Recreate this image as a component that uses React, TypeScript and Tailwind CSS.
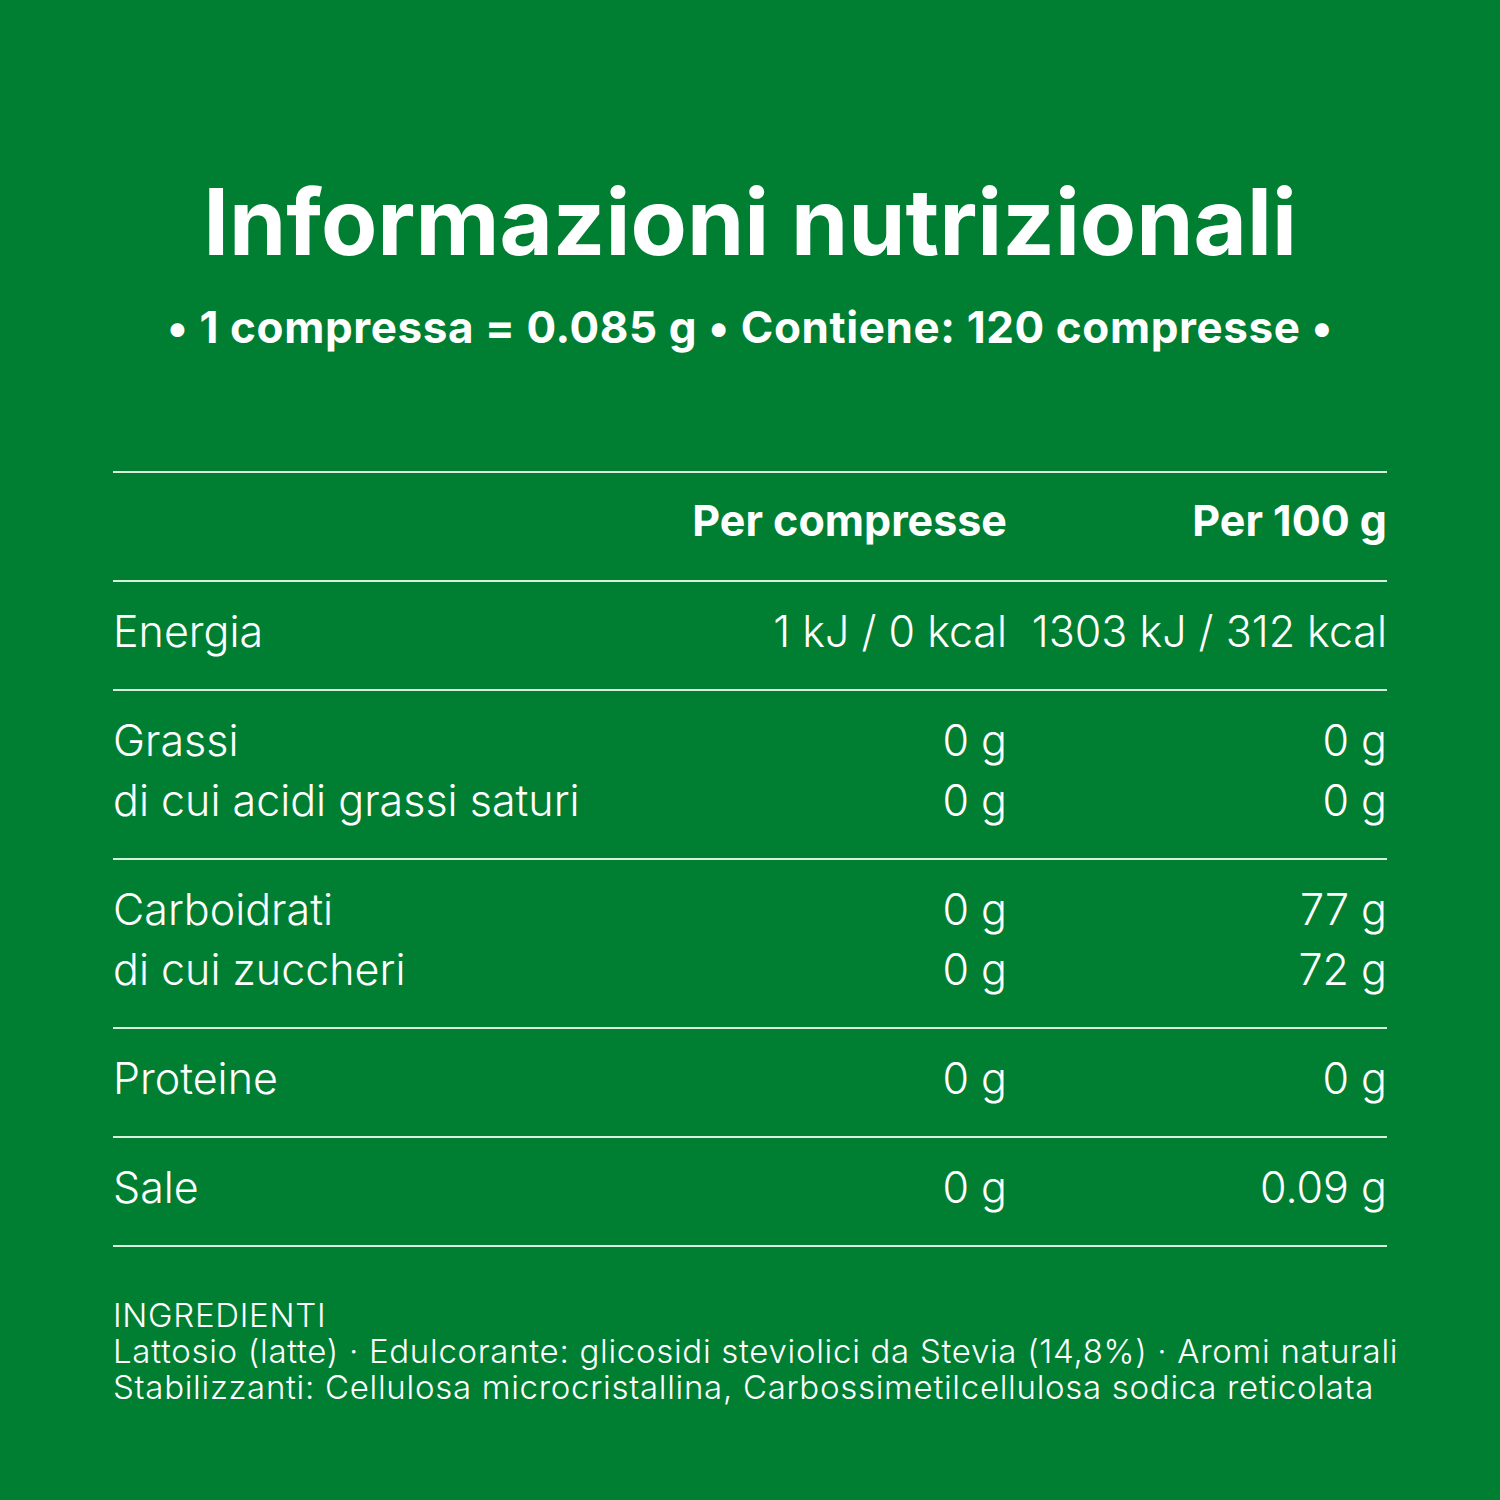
const rows: { labels: string[]; perTab: string[]; per100: string[] }[] = [
  { labels: ['Energia'], perTab: ['1 kJ / 0 kcal'], per100: ['1303 kJ / 312 kcal'] },
  { labels: ['Grassi', 'di cui acidi grassi saturi'], perTab: ['0 g', '0 g'], per100: ['0 g', '0 g'] },
  { labels: ['Carboidrati', 'di cui zuccheri'], perTab: ['0 g', '0 g'], per100: ['77 g', '72 g'] },
  { labels: ['Proteine'], perTab: ['0 g'], per100: ['0 g'] },
  { labels: ['Sale'], perTab: ['0 g'], per100: ['0.09 g'] },
];

export default function App() {
  return (
    <div
      className="w-[1500px] h-[1500px] bg-[#007f33] text-white flex flex-col"
      style={{ fontFamily: 'Inter, "Noto Sans", sans-serif' }}
    >
      <header className="flex flex-col items-center pt-[172px]">
        <h1 className="text-[92px] leading-[100px] font-bold">
          Informazioni nutrizionali
        </h1>
        <p className="mt-[30px] text-[44px] leading-[50px] font-bold tracking-[0.6px]">
          • 1 compressa = 0.085 g • Contiene: 120 compresse •
        </p>
      </header>

      <section className="mx-[113px] mt-[119px]">
        <div className="grid grid-cols-[1fr_420px_380px] border-y-2 border-[#d9f0dd] pt-[18px] pb-[30px] text-[43px] leading-[59px] font-bold whitespace-nowrap">
          <span />
          <span className="text-right">Per compresse</span>
          <span className="text-right">Per 100 g</span>
        </div>
        {rows.map((row) => (
          <div
            key={row.labels[0]}
            className="grid grid-cols-[1fr_420px_380px] border-b-2 border-[#d9f0dd] pt-[19px] pb-[28px] text-[43px] leading-[60px] font-light whitespace-nowrap"
          >
            <div className="flex flex-col">
              {row.labels.map((l) => (
                <span key={l}>{l}</span>
              ))}
            </div>
            <div className="flex flex-col items-end">
              {row.perTab.map((v, i) => (
                <span key={i}>{v}</span>
              ))}
            </div>
            <div className="flex flex-col items-end">
              {row.per100.map((v, i) => (
                <span key={i}>{v}</span>
              ))}
            </div>
          </div>
        ))}

        <div className="mt-[50px] text-[33px] leading-[36px] font-light tracking-[0.7px]">
          <p>INGREDIENTI</p>
          <p className="whitespace-nowrap">
            Lattosio (latte) · Edulcorante: glicosidi steviolici da Stevia (14,8%) · Aromi naturali
          </p>
          <p className="whitespace-nowrap">
            Stabilizzanti: Cellulosa microcristallina, Carbossimetilcellulosa sodica reticolata
          </p>
        </div>
      </section>
    </div>
  );
}
